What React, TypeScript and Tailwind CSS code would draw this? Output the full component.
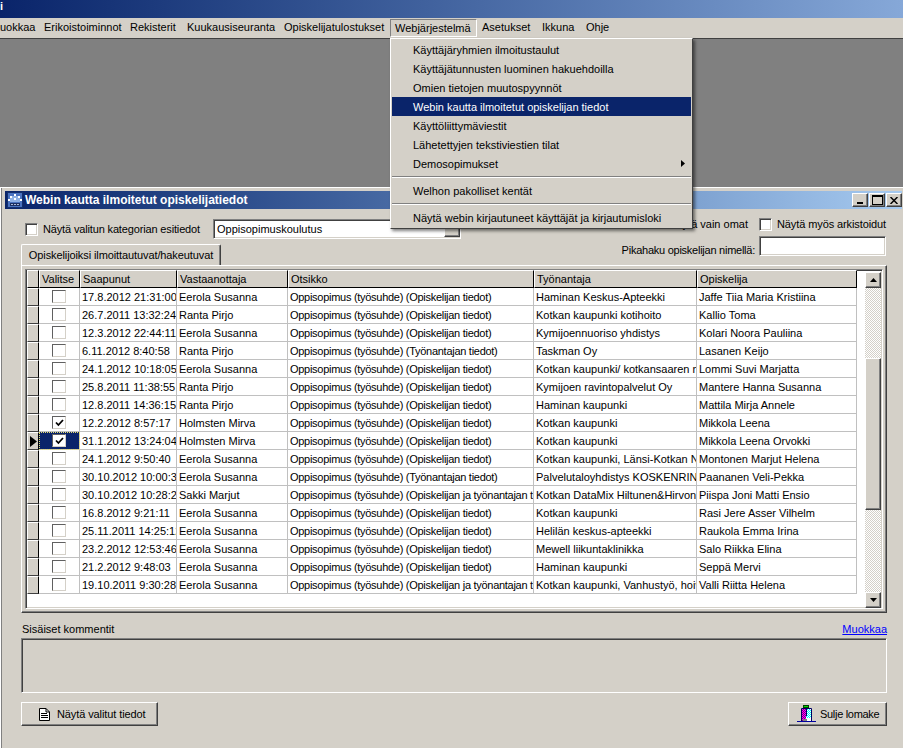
import { ReactNode } from 'react';

const raised = 'border border-t-white border-l-white border-r-[#404040] border-b-[#404040] shadow-[inset_-1px_-1px_0_#808080]';
const sunken = 'border border-t-[#808080] border-l-[#808080] border-r-white border-b-white shadow-[inset_1px_1px_0_#404040,inset_-1px_-1px_0_#d4d0c8]';

const opi = 'Oppisopimus (työsuhde) (Opiskelijan tiedot)';
const tyo = 'Oppisopimus (työsuhde) (Työnantajan tiedot)';
const both = 'Oppisopimus (työsuhde) (Opiskelijan ja työnantajan tiedot)';

const rows = [
  ['17.8.2012 21:31:00', 'Eerola Susanna', opi, 'Haminan Keskus-Apteekki', 'Jaffe Tiia Maria Kristiina'],
  ['26.7.2011 13:32:24', 'Ranta Pirjo', opi, 'Kotkan kaupunki kotihoito', 'Kallio Toma'],
  ['12.3.2012 22:44:11', 'Eerola Susanna', opi, 'Kymijoennuoriso yhdistys', 'Kolari Noora Pauliina'],
  ['6.11.2012 8:40:58', 'Ranta Pirjo', tyo, 'Taskman Oy', 'Lasanen Keijo'],
  ['24.1.2012 10:18:05', 'Eerola Susanna', opi, 'Kotkan kaupunki/ kotkansaaren nuorisotyö', 'Lommi Suvi Marjatta'],
  ['25.8.2011 11:38:55', 'Ranta Pirjo', opi, 'Kymijoen ravintopalvelut Oy', 'Mantere Hanna Susanna'],
  ['12.8.2011 14:36:15', 'Ranta Pirjo', opi, 'Haminan kaupunki', 'Mattila Mirja Annele'],
  ['12.2.2012 8:57:17', 'Holmsten Mirva', opi, 'Kotkan kaupunki', 'Mikkola Leena'],
  ['31.1.2012 13:24:04', 'Holmsten Mirva', opi, 'Kotkan kaupunki', 'Mikkola Leena Orvokki'],
  ['24.1.2012 9:50:40', 'Eerola Susanna', opi, 'Kotkan kaupunki, Länsi-Kotkan Nuoriso', 'Montonen Marjut Helena'],
  ['30.10.2012 10:00:31', 'Eerola Susanna', tyo, 'Palvelutaloyhdistys KOSKENRINNE', 'Paananen Veli-Pekka'],
  ['30.10.2012 10:28:22', 'Sakki Marjut', both, 'Kotkan DataMix Hiltunen&Hirvonen', 'Piispa Joni Matti Ensio'],
  ['16.8.2012 9:21:11', 'Eerola Susanna', opi, 'Kotkan kaupunki', 'Rasi Jere Asser Vilhelm'],
  ['25.11.2011 14:25:12', 'Eerola Susanna', opi, 'Helilän keskus-apteekki', 'Raukola Emma Irina'],
  ['23.2.2012 12:53:46', 'Eerola Susanna', opi, 'Mewell liikuntaklinikka', 'Salo Riikka Elina'],
  ['21.2.2012 9:48:03', 'Eerola Susanna', opi, 'Haminan kaupunki', 'Seppä Mervi'],
  ['19.10.2011 9:30:28', 'Eerola Susanna', both, 'Kotkan kaupunki, Vanhustyö, hoiva', 'Valli Riitta Helena'],
];

const menus = [
  { label: 'uokkaa', cls: 'w-[44px] pl-0' },
  { label: 'Erikoistoiminnot', cls: 'w-[86px]' },
  { label: 'Rekisterit', cls: 'w-[57px]' },
  { label: 'Kuukausiseuranta', cls: 'w-[97px]' },
  { label: 'Opiskelijatulostukset', cls: 'w-[105px]' },
];

const gridCols = 'grid grid-cols-[12px_41px_97px_111px_246px_163px_160px]';

function Check({ checked, small }: { checked?: boolean; small?: boolean }) {
  return (
    <span
      className={`flex shrink-0 items-center justify-center bg-white ${
        small
          ? 'h-[13px] w-[14px] border border-t-[#606060] border-l-[#606060] border-r-[#d4d0c8] border-b-[#d4d0c8]'
          : 'h-[13px] w-[13px] border border-t-[#808080] border-l-[#808080] border-r-white border-b-white shadow-[inset_1px_1px_0_#404040,inset_-1px_-1px_0_#d4d0c8]'
      }`}
    >
      {checked && (
        <svg width="9" height="8" viewBox="0 0 9 8">
          <path d="M1 3.5 L3.4 6 L8 1" fill="none" stroke="#000" strokeWidth="1.8" />
        </svg>
      )}
    </span>
  );
}

function WinBtn({ children }: { children: ReactNode }) {
  return <span className={`flex h-[14px] w-[16px] items-center justify-center bg-[#d4d0c8] ${raised}`}>{children}</span>;
}

function ScrollBtn({ up }: { up?: boolean }) {
  return (
    <span className={`flex h-[16px] w-[16px] shrink-0 items-center justify-center bg-[#d4d0c8] ${raised}`}>
      <svg width="7" height="4" viewBox="0 0 7 4">
        <path d={up ? 'M3.5 0 L7 4 L0 4 Z' : 'M0 0 L7 0 L3.5 4 Z'} fill="#000" />
      </svg>
    </span>
  );
}

function MenuRow({ label, active, arrow }: { label: string; active?: boolean; arrow?: boolean }) {
  return (
    <div className={`flex h-[19px] items-center justify-between pl-[21px] pr-[6px] ${active ? 'bg-[#0a246a] text-white' : ''}`}>
      <span className="translate-y-[1px]">{label}</span>
      {arrow && (
        <svg width="4" height="7" viewBox="0 0 4 7">
          <path d="M0 0 L4 3.5 L0 7 Z" fill="#000" />
        </svg>
      )}
    </div>
  );
}

function MenuSep({ cls }: { cls: string }) {
  return (
    <div className={`flex items-center ${cls}`}>
      <div className="h-[2px] w-full border-t border-t-[#808080] border-b border-b-white" />
    </div>
  );
}

function AppIcon() {
  return (
    <svg width="16" height="16" viewBox="0 0 16 16" className="shrink-0">
      <rect width="16" height="16" fill="#14306e" />
      <rect x="1" y="1" width="14" height="14" fill="#4a72c0" />
      <rect x="3" y="4" width="10" height="6" fill="#8fb0e4" />
      <rect x="7" y="2" width="2" height="2" fill="#fff" />
      <rect x="3" y="4" width="2" height="2" fill="#fff" />
      <rect x="11" y="4" width="2" height="2" fill="#fff" />
      <rect x="1" y="7" width="2" height="2" fill="#fff" />
      <rect x="13" y="7" width="2" height="2" fill="#fff" />
      <rect x="7" y="6" width="2" height="2" fill="#fff" />
      <rect x="3" y="11" width="10" height="3" fill="#1c2f62" />
      <rect x="4" y="12" width="2" height="1" fill="#aab8d8" />
      <rect x="7" y="12" width="2" height="1" fill="#aab8d8" />
      <rect x="10" y="12" width="2" height="1" fill="#aab8d8" />
    </svg>
  );
}

function DocIcon() {
  return (
    <svg width="11" height="13" viewBox="0 0 11 13" className="shrink-0">
      <path d="M0.5 0.5 H7 L10.5 4 V12.5 H0.5 Z" fill="#fff" stroke="#000" />
      <path d="M7 0.5 V4 H10.5" fill="none" stroke="#000" />
      <path d="M2 5.5 H8 M2 7.5 H9 M2 9.5 H9" stroke="#000" />
    </svg>
  );
}

function DoorIcon() {
  return (
    <svg width="19" height="18" viewBox="0 0 19 18" className="shrink-0">
      <defs>
        <pattern id="mag" width="2" height="2" patternUnits="userSpaceOnUse">
          <rect width="2" height="2" fill="#ff00ff" />
          <rect width="1" height="1" fill="#800080" />
          <rect x="1" y="1" width="1" height="1" fill="#800080" />
        </pattern>
        <pattern id="cy" width="2" height="2" patternUnits="userSpaceOnUse">
          <rect width="2" height="2" fill="#ffffff" />
          <rect width="1" height="1" fill="#00ffff" />
          <rect x="1" y="1" width="1" height="1" fill="#00ffff" />
        </pattern>
      </defs>
      <rect x="6.5" y="0.5" width="5" height="2" fill="#00e000" stroke="#004000" />
      <rect x="5" y="4" width="4" height="13" fill="url(#mag)" />
      <rect x="9" y="4" width="5" height="9" fill="url(#cy)" />
      <rect x="9" y="13" width="5" height="4" fill="#fff" />
      <path d="M4.5 17 V3.5 H14.5 V17 M9.5 3.5 V11" fill="none" stroke="#000060" />
      <rect x="6" y="14" width="4" height="3" fill="#808080" />
      <path d="M0 16.5 H19" stroke="#0000a0" />
    </svg>
  );
}

export default function App() {
  return (
    <div className="relative flex h-[748px] w-[903px] flex-col overflow-hidden bg-[#d4d0c8] font-['Liberation_Sans',sans-serif] text-[11px] leading-[13px] text-black">
      <div className="h-[18px] shrink-0 bg-gradient-to-r from-[#0a246a] to-[#86a8d8] pl-0 font-bold text-white">i</div>

      <div className="flex h-[20px] shrink-0 items-center bg-[#d4d0c8] pb-[2px]">
        {menus.map((m) => (
          <span key={m.label} className={m.cls}>
            {m.label}
          </span>
        ))}
        <span className="ml-[1px] flex h-[18px] w-[87px] translate-y-[1px] items-center border border-t-[#808080] border-l-[#808080] border-r-white border-b-white pl-[4px]">
          Webjärjestelmä
        </span>
        <span className="ml-[5px] w-[60px]">Asetukset</span>
        <span className="w-[44px]">Ikkuna</span>
        <span>Ohje</span>
      </div>

      <div className="h-[149px] shrink-0 border-t border-t-[#404040] bg-[#808080]" />

      <div className="flex min-h-0 flex-1 flex-col border-t border-l border-t-white border-l-white pl-[4px] pr-[1px] pt-[3px] shadow-[inset_1px_0_0_#808080]">
        <div className="flex h-[18px] shrink-0 items-center bg-gradient-to-r from-[#0a246a] to-[#a6caf0] pl-[2px] text-white">
          <AppIcon />
          <span className="ml-[2px] flex-1 text-[12px] font-bold">Webin kautta ilmoitetut opiskelijatiedot</span>
          <WinBtn>
            <span className="mt-[6px] h-[2px] w-[6px] bg-black" />
          </WinBtn>
          <span className="ml-[1px]" />
          <WinBtn>
            <span className="h-[10px] w-[11px] border border-t-2 border-black" />
          </WinBtn>
          <span className="ml-[1px]" />
          <WinBtn>
            <svg width="8" height="7" viewBox="0 0 8 7">
              <path d="M0.5 0 L7.5 7 M7.5 0 L0.5 7" stroke="#000" strokeWidth="1.5" />
            </svg>
          </WinBtn>
        </div>

        <div className="flex h-[28px] shrink-0 items-start pl-[20px] pr-[17px]">
          <span className="mt-[14px] flex w-[188px] items-center">
            <Check />
            <span className="ml-[5px] tracking-[-0.15px]">Näytä valitun kategorian esitiedot</span>
          </span>
          <span className={`mt-[10px] flex h-[20px] w-[248px] items-center justify-between bg-white pl-[3px] ${sunken}`}>
            Oppisopimuskoulutus
            <span className={`h-[16px] w-[16px] bg-[#d4d0c8] ${raised}`} />
          </span>
          <span className="ml-auto mt-[9px] flex items-center">
            <span className="mr-[11px]">Näytä vain omat</span>
            <Check />
            <span className="ml-[5px] w-[108px] whitespace-nowrap tracking-[-0.1px]">Näytä myös arkistoidut</span>
          </span>
        </div>

        <div className="flex h-[28px] shrink-0 items-start justify-end pr-[16px]">
          <span className="mt-[7px] tracking-[-0.25px]">Pikahaku opiskelijan nimellä:</span>
          <span className={`-mt-[1px] ml-[4px] h-[20px] w-[127px] bg-white ${sunken}`} />
        </div>

        <div className="-mt-[21px] ml-[16px] flex h-[21px] w-[200px] shrink-0 items-center justify-center rounded-t-[2px] border border-b-0 border-t-white border-l-white border-r-[#404040] tracking-[-0.1px] shadow-[inset_-1px_0_0_#808080]">
          Opiskelijoiksi ilmoittautuvat/hakeutuvat
        </div>

        <div className="ml-[16px] mr-[15px] flex h-[348px] shrink-0 flex-col border border-t-white border-l-white border-r-[#404040] border-b-[#404040] px-[3px] pb-[3px] pt-[3px] shadow-[inset_-1px_-1px_0_#808080]">
          <div className={`flex h-[340px] bg-white ${sunken} px-[1px] pt-0`}>
            <div className="min-w-0 flex-1">
              <div className={gridCols}>
                {['', 'Valitse', 'Saapunut', 'Vastaanottaja', 'Otsikko', 'Työnantaja', 'Opiskelija'].map((h, i) => (
                  <div
                    key={i}
                    className="flex h-[18px] items-center overflow-hidden whitespace-nowrap border border-t-white border-l-white border-r-black border-b-black bg-[#d4d0c8] pl-[2px]"
                  >
                    {h}
                  </div>
                ))}
              </div>
              {rows.map((r, i) => (
                <div key={i} className={`${gridCols} h-[18px]`}>
                  <div className="flex items-center border border-t-white border-l-white border-r-black border-b-[#404040] bg-[#d4d0c8]">
                    {i === 8 && (
                      <svg width="7" height="11" viewBox="0 0 7 11" className="ml-[2px]">
                        <path d="M0 0 L7 5.5 L0 11 Z" fill="#000" />
                      </svg>
                    )}
                  </div>
                  <div
                    className={`flex items-center justify-center border-r border-b border-[#c0c0c0] ${
                      i === 8 ? 'bg-[#0a246a] outline-1 -outline-offset-1 outline-dotted outline-[#e8e070]' : ''
                    }`}
                  >
                    <Check small checked={i === 7 || i === 8} />
                  </div>
                  {r.map((c, j) => (
                    <div
                      key={j}
                      className={`flex items-center overflow-hidden whitespace-nowrap border-r border-b border-[#c0c0c0] pl-[2px] pt-[2px] ${
                        j === 2 ? 'tracking-[-0.28px]' : ''
                      }`}
                    >
                      {c}
                    </div>
                  ))}
                </div>
              ))}
            </div>
            <div className="ml-[7px] flex w-[16px] shrink-0 flex-col pt-[2px]">
              <ScrollBtn up />
              <div className="flex flex-1 flex-col bg-[repeating-conic-gradient(#d4d0c8_0_25%,#fff_0_50%)] bg-[length:2px_2px]">
                <div className="h-[70px] shrink-0" />
                <div className={`h-[152px] shrink-0 bg-[#d4d0c8] ${raised}`} />
              </div>
              <ScrollBtn />
            </div>
          </div>
        </div>

        <div className="ml-[17px] mr-[15px] mt-[9px] flex h-[14px] shrink-0 items-center justify-between">
          <span>Sisäiset kommentit</span>
          <span className="text-[#0000ff] underline">Muokkaa</span>
        </div>
        <div className={`ml-[16px] mr-[15px] mt-[2px] h-[55px] shrink-0 ${sunken}`} />

        <div className="ml-[16px] mr-[15px] mt-[9px] flex shrink-0 justify-between">
          <span className={`flex h-[24px] w-[137px] items-center gap-[7px] pl-[17px] tracking-[-0.1px] ${raised}`}>
            <DocIcon />
            Näytä valitut tiedot
          </span>
          <span className={`flex h-[24px] w-[99px] items-center gap-[4px] pl-[8px] tracking-[-0.3px] ${raised}`}>
            <DoorIcon />
            Sulje lomake
          </span>
        </div>
      </div>

      <div className="absolute left-[390px] top-[38px] w-[303px] border border-t-white border-l-white border-r-[#404040] border-b-[#404040] bg-[#d4d0c8] p-[1px] shadow-[2px_2px_3px_rgba(0,0,0,0.5)]">
        <MenuRow label="Käyttäjäryhmien ilmoitustaulut" />
        <MenuRow label="Käyttäjätunnusten luominen hakuehdoilla" />
        <MenuRow label="Omien tietojen muutospyynnöt" />
        <MenuRow label="Webin kautta ilmoitetut opiskelijan tiedot" active />
        <MenuRow label="Käyttöliittymäviestit" />
        <MenuRow label="Lähetettyjen tekstiviestien tilat" />
        <MenuRow label="Demosopimukset" arrow />
        <MenuSep cls="h-[8px]" />
        <MenuRow label="Welhon pakolliset kentät" />
        <MenuSep cls="h-[8px]" />
        <MenuRow label="Näytä webin kirjautuneet käyttäjät ja kirjautumisloki" />
      </div>
    </div>
  );
}
